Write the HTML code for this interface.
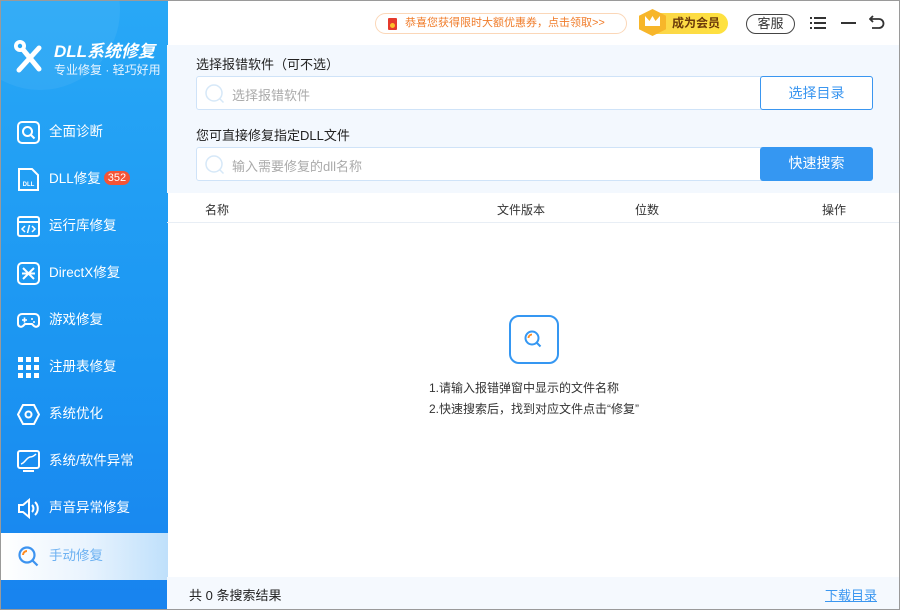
<!DOCTYPE html>
<html><head><meta charset="utf-8"><style>
*{margin:0;padding:0;box-sizing:border-box}
body{width:900px;height:610px;overflow:hidden;font-family:"Liberation Sans","Noto Sans CJK SC",sans-serif;background:#fff;position:relative}
.win{position:absolute;left:0;top:0;width:900px;height:610px;border:1px solid #9a9a9a;overflow:hidden}
.side{position:absolute;left:-1px;top:-1px;width:168px;height:611px;background:linear-gradient(180deg,#28a8f6 0%,#1b95f2 60%,#1883ef 100%)}
.circ{position:absolute;left:-40px;top:-70px;width:160px;height:160px;border-radius:50%;background:rgba(255,255,255,0.06)}
.logo{position:absolute;left:14px;top:40px;width:30px;height:34px}
.title{position:absolute;left:54px;top:37px;color:#fff;font-size:17px;font-weight:bold;font-style:italic;white-space:nowrap}
.sub{position:absolute;left:54px;top:61px;color:#e8f4ff;font-size:12px;white-space:nowrap}
.item{position:absolute;left:0;width:168px;height:47px;color:#fff;font-size:13.5px}
.item .ic{position:absolute;left:17px;top:12px;width:23px;height:23px}
.item .t{position:absolute;left:49px;top:14px;line-height:18px;white-space:nowrap}
.badge{display:inline-block;background:#f45436;color:#fff;font-size:11px;border-radius:8px;padding:0 4px;line-height:14px;margin-left:3px;vertical-align:2px}
.act{background:linear-gradient(90deg,#fff 0%,#eaf4fe 50%,#bfe0fb 100%);color:#6eb2f2}
.panel{position:absolute;left:166px;top:44px;width:733px;height:148px;background:#f3f8fe}
.lbl{position:absolute;left:29px;font-size:13px;color:#222}
.inp{position:absolute;left:29px;width:677px;height:34px;border:1px solid #cfe3f8;background:#fff;border-radius:3px}
.inp .ph{position:absolute;left:35px;top:8px;font-size:13px;color:#aaa}
.inp svg{position:absolute;left:7px;top:6px}
.btn{position:absolute;right:-1px;top:-1px;width:113px;height:34px;border-radius:3px;font-size:14px;text-align:center;line-height:33px}
.hdr{position:absolute;left:166px;top:192px;width:733px;height:30px;border-bottom:1px solid #e8eef5;font-size:12px;color:#333}
.hdr span{position:absolute;top:8px}
.foot{position:absolute;left:166px;top:576px;width:733px;height:33px;background:#f5f9fe;font-size:13px}
</style></head><body><div class="win">
<div class="side">
<div class="circ"></div>
<svg class="logo" viewBox="0 0 30 34"><g stroke="#fff" stroke-width="5" stroke-linecap="round" fill="none"><path d="M5 30 L25 8"/><path d="M6 6 L25 29"/></g><circle cx="6" cy="6" r="6" fill="#fff"/><circle cx="6" cy="6" r="2.2" fill="#27a7f5"/></svg>
<div class="title">DLL系统修复</div>
<div class="sub">专业修复 · 轻巧好用</div>

<div class="item" style="top:109px"><svg class="ic" viewBox="0 0 23 23"><rect x="1" y="1" width="21" height="21" rx="4" fill="none" stroke="#fff" stroke-width="2"/><circle cx="10.5" cy="10.5" r="4.5" fill="none" stroke="#fff" stroke-width="2"/><path d="M14 14l3.5 3.5" stroke="#fff" stroke-width="2"/></svg><span class="t">全面诊断</span></div>
<div class="item" style="top:156px"><svg class="ic" viewBox="0 0 23 23"><path d="M2 1h13l6 6v15H2z" fill="none" stroke="#fff" stroke-width="2"/><text x="11.5" y="18" font-size="6" fill="#fff" text-anchor="middle" font-family="Liberation Sans" font-weight="bold">DLL</text></svg><span class="t">DLL修复<span class="badge">352</span></span></div>
<div class="item" style="top:203px"><svg class="ic" viewBox="0 0 23 23"><rect x="1" y="2" width="21" height="19" rx="2" fill="none" stroke="#fff" stroke-width="2"/><path d="M1 7h21" stroke="#fff" stroke-width="2"/><path d="M8 11l-3 3 3 3M15 11l3 3-3 3M12.5 10l-2 8" stroke="#fff" stroke-width="1.5" fill="none"/></svg><span class="t">运行库修复</span></div>
<div class="item" style="top:250px"><svg class="ic" viewBox="0 0 23 23"><rect x="1" y="1" width="21" height="21" rx="4" fill="none" stroke="#fff" stroke-width="2"/><path d="M6 6l11 11M17 6L6 17M5 11.5h13" stroke="#fff" stroke-width="2"/></svg><span class="t">DirectX修复</span></div>
<div class="item" style="top:297px"><svg class="ic" viewBox="0 0 23 23"><path d="M5 5h13a4 4 0 0 1 4 4v6a3 3 0 0 1-5 2l-2-2H8l-2 2a3 3 0 0 1-5-2V9a4 4 0 0 1 4-4z" fill="none" stroke="#fff" stroke-width="2"/><path d="M5 11h5M7.5 8.5v5" stroke="#fff" stroke-width="1.6"/><circle cx="15" cy="10" r="1" fill="#fff"/><circle cx="17" cy="13" r="1" fill="#fff"/></svg><span class="t">游戏修复</span></div>
<div class="item" style="top:344px"><svg class="ic" viewBox="0 0 23 23" fill="#fff"><rect x="1" y="1" width="5" height="5"/><rect x="9" y="1" width="5" height="5"/><rect x="17" y="1" width="5" height="5"/><rect x="1" y="9" width="5" height="5"/><rect x="9" y="9" width="5" height="5"/><rect x="17" y="9" width="5" height="5"/><rect x="1" y="17" width="5" height="5"/><rect x="9" y="17" width="5" height="5"/><rect x="17" y="17" width="5" height="5"/></svg><span class="t">注册表修复</span></div>
<div class="item" style="top:391px"><svg class="ic" viewBox="0 0 23 23"><path d="M6 2h11l5 9.5-5 9.5H6l-5-9.5z" fill="none" stroke="#fff" stroke-width="2"/><circle cx="11.5" cy="11.5" r="3" fill="none" stroke="#fff" stroke-width="2"/></svg><span class="t">系统优化</span></div>
<div class="item" style="top:438px"><svg class="ic" viewBox="0 0 23 23"><rect x="1" y="1" width="21" height="17" rx="2" fill="none" stroke="#fff" stroke-width="2"/><path d="M4 14c4-1 5-6 9-7 2 0 4-1 6-3" stroke="#fff" stroke-width="1.5" fill="none"/><path d="M6 21h11" stroke="#fff" stroke-width="2"/></svg><span class="t">系统/软件异常</span></div>
<div class="item" style="top:485px"><svg class="ic" viewBox="0 0 23 23"><path d="M2 8h4l6-5v17l-6-5H2z" fill="none" stroke="#fff" stroke-width="2"/><path d="M15 8a5 5 0 0 1 0 7M18 5a9 9 0 0 1 0 13" stroke="#fff" stroke-width="2" fill="none"/></svg><span class="t">声音异常修复</span></div>
<div class="item act" style="top:533px"><svg class="ic" viewBox="0 0 23 23"><circle cx="10" cy="10" r="7.5" fill="none" stroke="#3c93f0" stroke-width="2.2"/><path d="M6 10a4 4 0 0 1 4-4" stroke="#ff8a1e" stroke-width="2" fill="none"/><path d="M15.5 15.5l5 5" stroke="#3c93f0" stroke-width="2.2"/></svg><span class="t">手动修复</span></div>
</div>

<div style="position:absolute;left:374px;top:12px;width:252px;height:21px;border:1px solid #fbd7b8;border-radius:11px;font-size:11px;color:#f07c2a;line-height:19px;padding-left:29px;background:#fff;white-space:nowrap">恭喜您获得限时大额优惠券，点击领取&gt;&gt;<span style="position:absolute;left:12px;top:4px;width:9px;height:12px;background:#e53a2c;border-radius:1px"></span><span style="position:absolute;left:14px;top:9px;width:5px;height:5px;background:#fbbf2a;border-radius:50%"></span></div>
<div style="position:absolute;left:640px;top:12px;width:87px;height:21px;border-radius:11px;background:linear-gradient(90deg,#fbd34a,#fee23f);font-size:12px;font-weight:bold;color:#6b3a0a;line-height:21px;padding-left:31px">成为会员</div>
<div style="position:absolute;left:638px;top:8px;width:27px;height:27px;background:#f7b62a;clip-path:polygon(50% 0,100% 25%,100% 75%,50% 100%,0 75%,0 25%)"></div>
<div style="position:absolute;left:644px;top:15px;width:15px;height:10px;background:#fff;clip-path:polygon(0 0,30% 50%,50% 0,70% 50%,100% 0,100% 100%,0 100%)"></div>
<div style="position:absolute;left:745px;top:13px;width:49px;height:20px;border:1px solid #444;border-radius:10px;font-size:13px;text-align:center;line-height:18px;color:#333">客服</div>
<svg style="position:absolute;left:809px;top:15px" width="16" height="14"><g fill="#333"><rect x="0" y="1" width="2" height="2"/><rect x="4" y="1" width="12" height="2"/><rect x="0" y="6" width="2" height="2"/><rect x="4" y="6" width="12" height="2"/><rect x="0" y="11" width="2" height="2"/><rect x="4" y="11" width="12" height="2"/></g></svg>
<div style="position:absolute;left:840px;top:21px;width:15px;height:2px;background:#333"></div>
<svg style="position:absolute;left:868px;top:13px" width="16" height="16"><path d="M4 2L1 5l3 3M1 5h9a4.5 4.5 0 0 1 0 9H3" stroke="#333" stroke-width="1.8" fill="none"/></svg>

<div class="panel">
<div class="lbl" style="top:9px">选择报错软件（可不选）</div>
<div class="inp" style="top:31px"><svg width="22" height="22"><circle cx="10" cy="10" r="8" fill="none" stroke="#d6e8f8" stroke-width="1.5"/><path d="M15.5 15.5l4 4" stroke="#d6e8f8" stroke-width="1.5"/></svg><span class="ph">选择报错软件</span><div class="btn" style="border:1px solid #3a96f0;color:#3a96f0;background:#fff">选择目录</div></div>
<div class="lbl" style="top:80px">您可直接修复指定DLL文件</div>
<div class="inp" style="top:102px"><svg width="22" height="22"><circle cx="10" cy="10" r="8" fill="none" stroke="#d6e8f8" stroke-width="1.5"/><path d="M15.5 15.5l4 4" stroke="#d6e8f8" stroke-width="1.5"/></svg><span class="ph">输入需要修复的dll名称</span><div class="btn" style="background:#3597f2;color:#fff">快速搜索</div></div>
</div>
<div class="hdr"><span style="left:38px">名称</span><span style="left:330px">文件版本</span><span style="left:468px">位数</span><span style="left:655px">操作</span></div>

<div style="position:absolute;left:508px;top:314px;width:50px;height:49px;border:2px solid #3597f2;border-radius:10px"></div>
<svg style="position:absolute;left:521px;top:327px" width="24" height="24"><circle cx="10" cy="10" r="6.5" fill="none" stroke="#3597f2" stroke-width="2"/><path d="M6.5 10a3.5 3.5 0 0 1 3.5-3.5" stroke="#ff8a1e" stroke-width="1.8" fill="none"/><path d="M14.5 14.5l4 4" stroke="#3597f2" stroke-width="2"/></svg>
<div style="position:absolute;left:428px;top:377px;font-size:12px;color:#333;line-height:21px;white-space:nowrap">1.请输入报错弹窗中显示的文件名称<br>2.快速搜索后，找到对应文件点击“修复”</div>

<div class="foot"><span style="position:absolute;left:22px;top:8px;color:#222">共 0 条搜索结果</span><span style="position:absolute;left:658px;top:8px;color:#3a96f0;text-decoration:underline">下载目录</span></div>
</div></body></html>
